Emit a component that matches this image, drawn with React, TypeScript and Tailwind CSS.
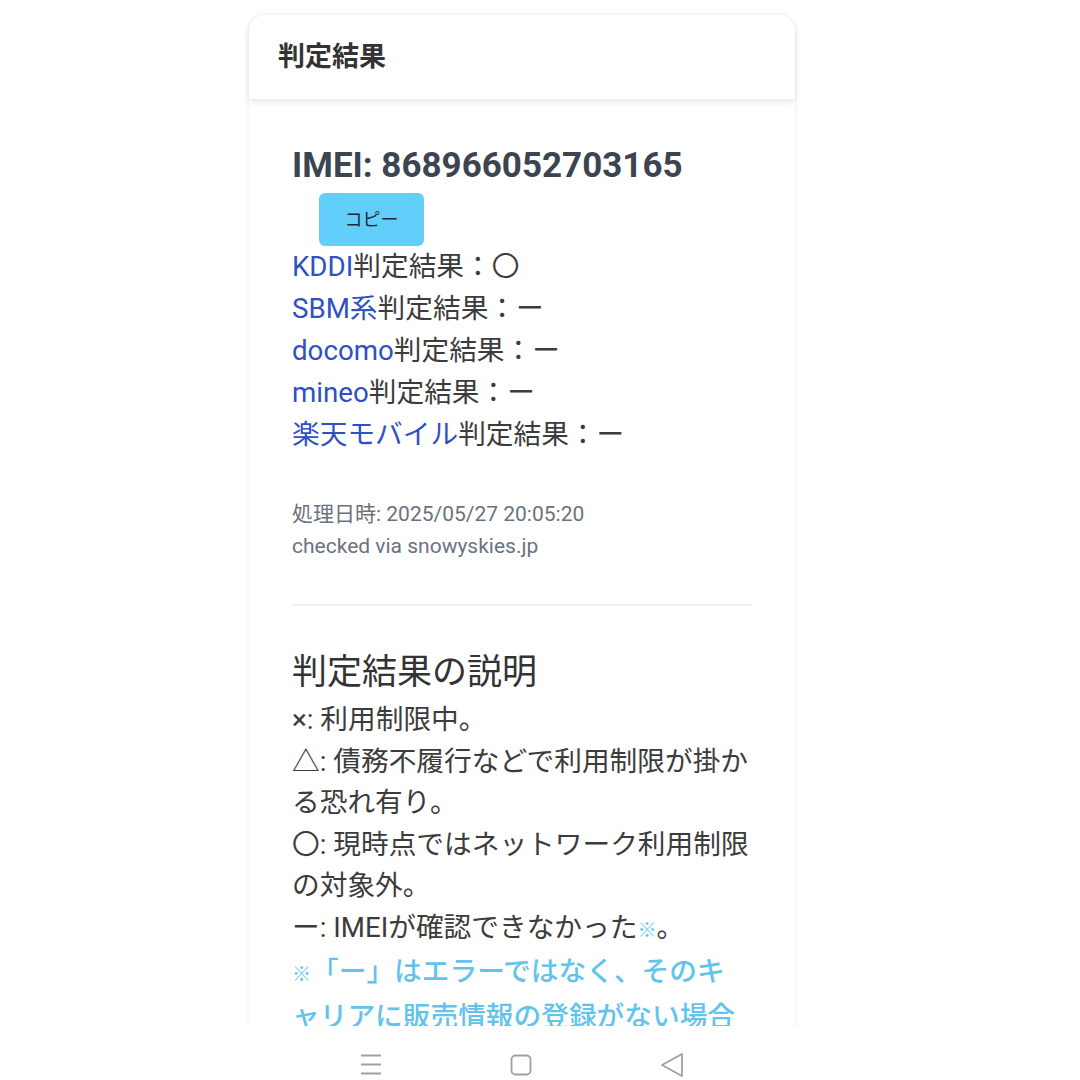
const carriers = [
  { name: "KDDI", result: "〇" },
  { name: "SBM系", result: "ー" },
  { name: "docomo", result: "ー" },
  { name: "mineo", result: "ー" },
  { name: "楽天モバイル", result: "ー" },
];

const font = { fontFamily: "Roboto, 'Noto Sans CJK JP', sans-serif" };

export default function App() {
  return (
    <div className="flex h-[1080px] flex-col bg-white" style={font}>
      <div className="flex-1 overflow-hidden pl-[249px] pt-[15px]">
        <div className="w-[546px] rounded-t-2xl bg-white shadow-[0_0_6px_rgba(0,0,0,0.08)]">
          <div className="flex h-[84px] items-center rounded-t-2xl pl-[29px] shadow-[0_3px_6px_rgba(0,0,0,0.09)]">
            <h1 className="text-[27px] font-bold text-[#333]">判定結果</h1>
          </div>

          <div className="pl-[43px] pr-[41px] pt-[46px]">
            <h2 className="text-[35px] font-bold leading-[42px] text-[#3d4451]">
              IMEI: 868966052703165
            </h2>
            <button className="ml-[27px] mt-[6px] h-[53px] w-[105px] rounded-md bg-[#62cffb] text-[18px] text-[#1f2937]">
              コピー
            </button>

            <div className="text-[27.7px] leading-[42px] text-[#3c3c3c]">
              {carriers.map((c) => (
                <div key={c.name}>
                  <span className="text-[#3050c4]">{c.name}</span>
                  判定結果：{c.result}
                </div>
              ))}
            </div>

            <div className="mt-[42px] text-[21px] leading-[32px] text-[#6b7280]">
              <div>処理日時: 2025/05/27 20:05:20</div>
              <div>checked via snowyskies.jp</div>
            </div>

            <hr className="mr-[2px] mt-[42px] border-t-2 border-[#eef0f3]" />

            <h3 className="mt-[45px] text-[35px] leading-[44px] text-[#333]">
              判定結果の説明
            </h3>
            <div className="mt-[4px] text-[27.7px] leading-[41.5px] text-[#3c3c3c]">
              <div>×: 利用制限中。</div>
              <div>△: 債務不履行などで利用制限が掛かる恐れ有り。</div>
              <div>〇: 現時点ではネットワーク利用制限の対象外。</div>
              <div>
                ー: IMEIが確認できなかった
                <span className="text-[19px] text-[#62c8ef]">※</span>。
              </div>
              <div className="pr-[6px] font-medium text-[#62c4ec]">
                <span className="text-[19px]">※</span>
                「ー」はエラーではなく、そのキャリアに販売情報の登録がない場合もあります。
              </div>
            </div>
          </div>
        </div>
      </div>

      <div className="flex h-[54px] items-start justify-center gap-[128px] bg-white pt-[28px]">
        <svg width="22" height="22" viewBox="0 0 22 22" className="ml-[-36px]">
          <path d="M1 1.5h20M1 10.5h20M1 19.5h20" stroke="#a0a0a0" strokeWidth="1.8" />
        </svg>
        <svg width="22" height="22" viewBox="0 0 22 22">
          <rect x="1.5" y="1.5" width="19" height="19" rx="4" fill="none" stroke="#a0a0a0" strokeWidth="1.8" />
        </svg>
        <svg width="24" height="26" viewBox="0 0 24 26" className="mt-[-2px]">
          <path d="M22 2 L2 13 L22 24 Z" fill="none" stroke="#a0a0a0" strokeWidth="1.8" strokeLinejoin="round" />
        </svg>
      </div>
    </div>
  );
}
